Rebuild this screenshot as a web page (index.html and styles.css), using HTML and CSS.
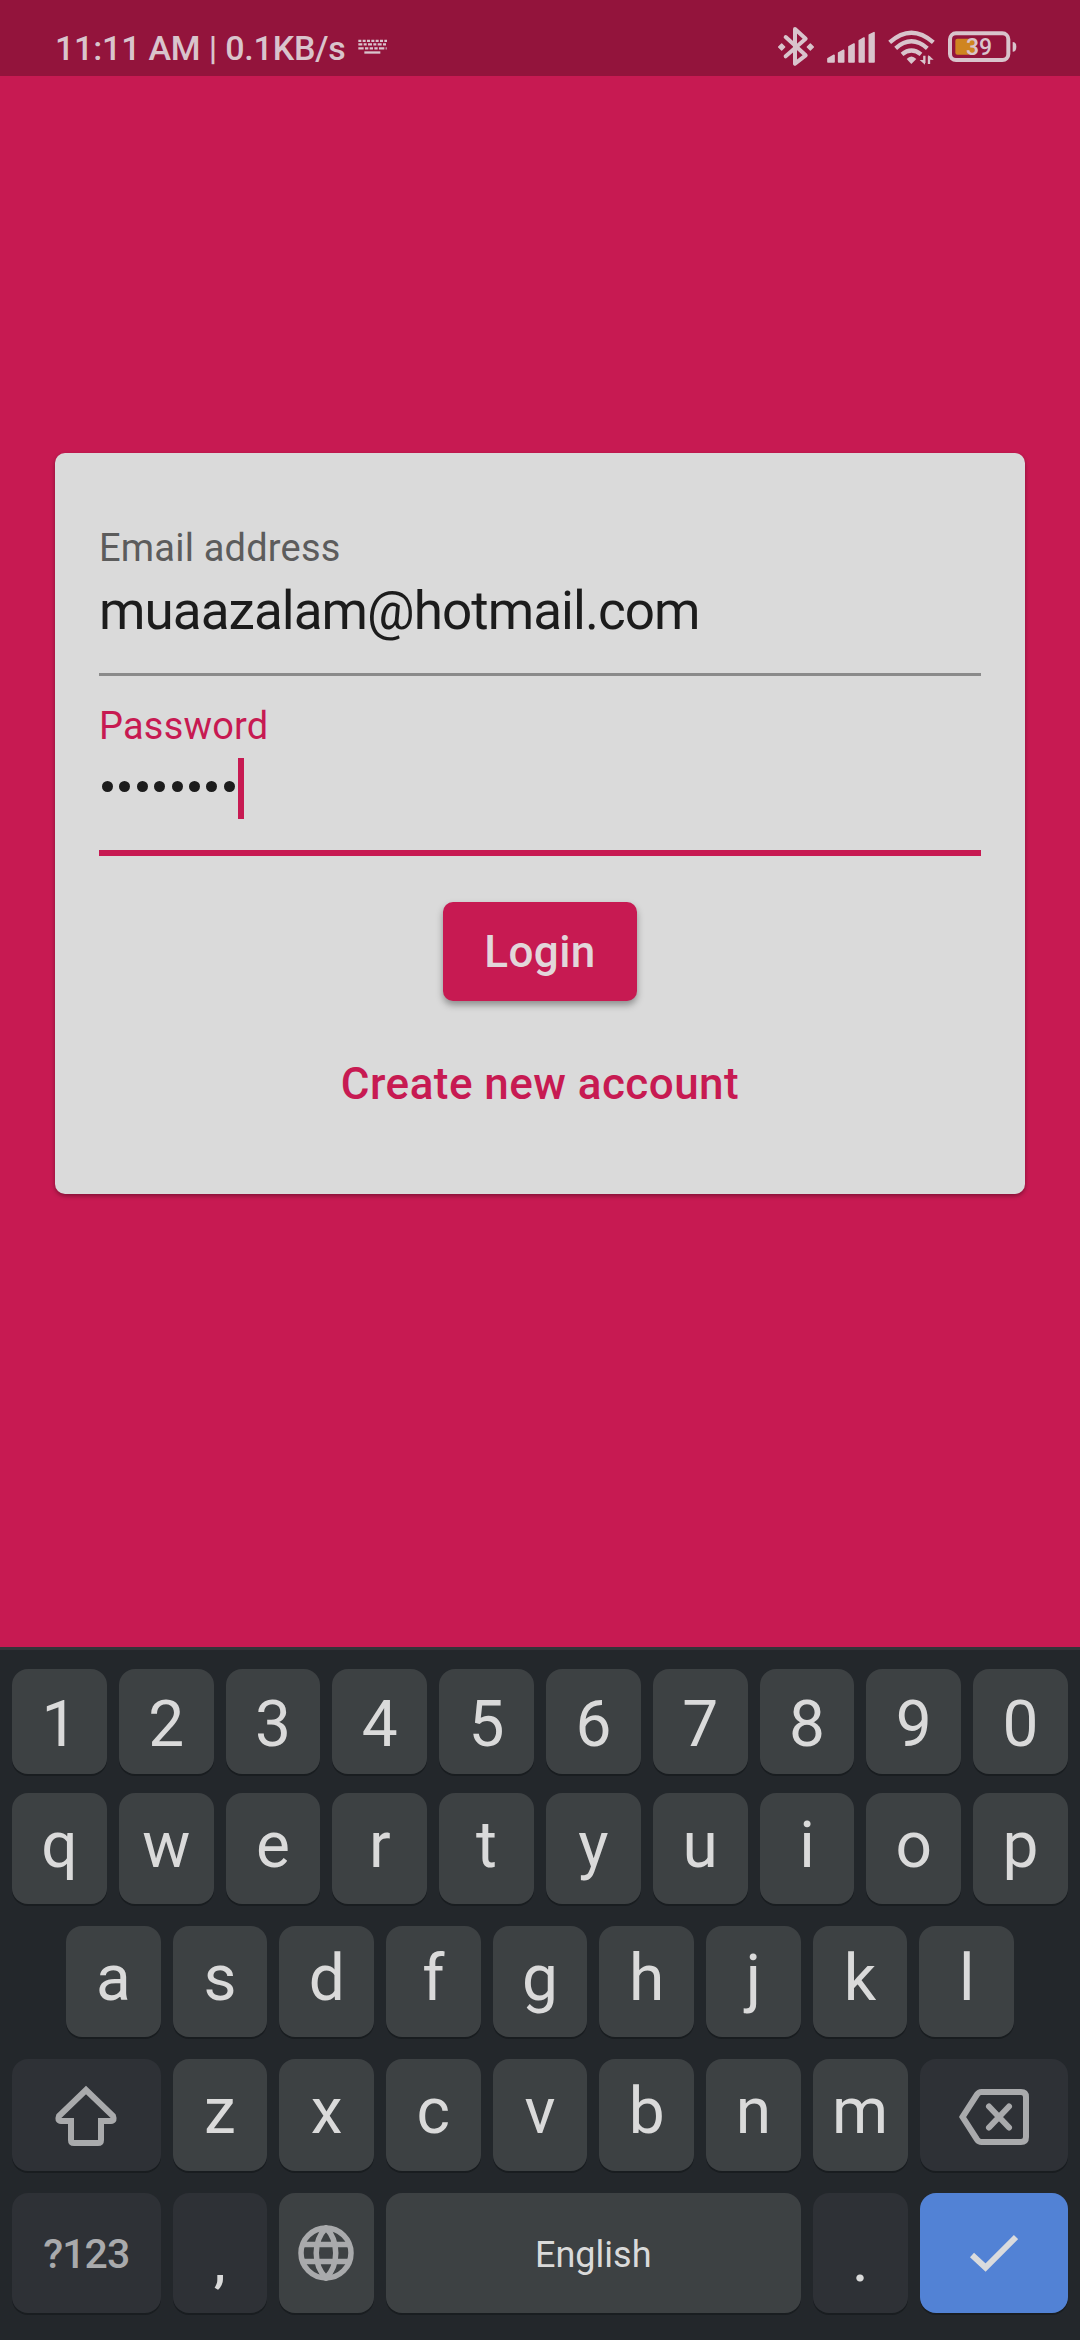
FILE: index.html
```html
<!DOCTYPE html>
<html lang="en">
<head>
<meta charset="utf-8">
<title>Login</title>
<link rel="stylesheet" href="styles.css">
</head>
<body>
<div class="screen">
  <header class="status">
    <span class="status-text">11:11 AM | 0.1KB/s</span>
    <svg class="ime" width="29" height="16" viewBox="0 0 87 48" fill="none" stroke="#d9c4cc">
      <path d="M1 5.500H87" stroke-width="7" stroke-dasharray="9 4"/>
      <path d="M1 16H86" stroke-width="7" stroke-dasharray="12 4 9 4"/>
      <path d="M1 28H86" stroke-width="7" stroke-dasharray="16 4 10 4 10 4 10 4"/>
      <path d="M19 40.500H67" stroke-width="7"/>
    </svg>
    <div class="status-icons">
      <svg width="36" height="42" viewBox="114 76 108 126" fill="none" stroke="#d9c4cc" stroke-width="12" stroke-linejoin="round" stroke-linecap="round">
        <path d="M137 112L197 167L165 192V88L197 117L137 170"/>
        <path d="M125 133L134 142L125 151L116 142ZM211 133L220 142L211 151L202 142Z" fill="#d9c4cc" stroke-width="4"/>
      </svg>
      <svg width="48" height="42" viewBox="261 76 144 126" fill="#d9c4cc" stroke="#d9c4cc" stroke-width="5" stroke-linejoin="round">
        <path d="M264 177L282 167V187H264ZM296 160L311 152V187H296ZM327 141L342 133V187H327ZM358 123L372 115V187H358ZM388 106L402 99V187H388Z"/>
      </svg>
      <svg width="47" height="42" viewBox="442 76 141 126" fill="none" stroke="#d9c4cc" stroke-width="13">
        <path d="M447 128Q512 70 578 128M465 146Q512 104 560 146M484 164Q512 141 541 164"/>
        <path d="M498 178Q512 163 527 178L512 193Z" fill="#d9c4cc" stroke="none"/>
        <path d="M551 168V190M565 193V170" stroke-width="7"/>
        <path d="M537 181H553V195ZM563 166V180H579Z" fill="#d9c4cc" stroke="none"/>
      </svg>
      <svg width="69" height="42" viewBox="626 76 207 126">
        <rect x="632" y="101" width="175" height="80" rx="18" fill="none" stroke="#d9c4cc" stroke-width="12"/>
        <path d="M820 127Q831 127 831 141Q831 156 820 156Z" fill="#d9c4cc"/>
        <rect x="648" y="117" width="62" height="48" rx="6" fill="#cf8520"/>
        <text x="719" y="167" text-anchor="middle" class="battery">39</text>
      </svg>
    </div>
  </header>

  <main class="stage">
    <form class="card">
      <div class="field">
        <label class="label">Email address</label>
        <div class="value">muaazalam@hotmail.com</div>
      </div>
      <div class="field focused">
        <label class="label">Password</label>
        <div class="value secret"><i></i><i></i><i></i><i></i><i></i><i></i><i></i><i></i><b class="caret"></b></div>
      </div>
      <button type="button" class="login">Login</button>
      <a class="create">Create new account</a>
    </form>
  </main>

  <section class="keyboard">
    <div class="row digits">
      <div class="key">1</div><div class="key">2</div><div class="key">3</div><div class="key">4</div><div class="key">5</div><div class="key">6</div><div class="key">7</div><div class="key">8</div><div class="key">9</div><div class="key">0</div>
    </div>
    <div class="row top">
      <div class="key">q</div><div class="key">w</div><div class="key">e</div><div class="key">r</div><div class="key">t</div><div class="key">y</div><div class="key">u</div><div class="key">i</div><div class="key">o</div><div class="key">p</div>
    </div>
    <div class="row home">
      <div class="key">a</div><div class="key">s</div><div class="key">d</div><div class="key">f</div><div class="key">g</div><div class="key">h</div><div class="key">j</div><div class="key">k</div><div class="key">l</div>
    </div>
    <div class="row lower">
      <div class="key dark wide">
        <svg width="64" height="64" viewBox="0 0 64 64" fill="none" stroke="#a9aaac" stroke-width="6" stroke-linejoin="round">
          <path d="M32 5L59 31Q61 36 57 36H47V55Q47 58 44 58H20Q17 58 17 55V36H7Q3 36 5 31Z" stroke-linejoin="miter"/>
        </svg>
      </div>
      <div class="key">z</div><div class="key">x</div><div class="key">c</div><div class="key">v</div><div class="key">b</div><div class="key">n</div><div class="key">m</div>
      <div class="key dark wide">
        <svg width="70" height="56" viewBox="0 0 70 56" fill="none" stroke="#a9aaac" stroke-width="6">
          <path d="M3.500 28L18 5.500Q19.700 3 22.500 3H62Q67 3 67 8V48Q67 53 62 53H22.500Q19.700 53 18 50.500Z"/>
          <path d="M30 17.500L50 38.500M50 17.500L30 38.500" stroke-linecap="round"/>
        </svg>
      </div>
    </div>
    <div class="row bottom">
      <div class="key dark wide symbols">?123</div>
      <div class="key dark punct">,</div>
      <div class="key globe">
        <svg width="56" height="56" viewBox="0 0 56 56" fill="none" stroke="#a9aaac" stroke-width="5.500">
          <circle cx="28" cy="28" r="25"/>
          <path d="M4 19.500H52M4 36.500H52M28 3C15 16 15 40 28 53C41 40 41 16 28 3Z"/>
        </svg>
      </div>
      <div class="key space">English</div>
      <div class="key dark punct">.</div>
      <div class="key wide enter">
        <svg width="48" height="38" viewBox="0 0 48 38" fill="none" stroke="#dadbdd" stroke-width="6">
          <path d="M2 21L15.500 33.500L46 3"/>
        </svg>
      </div>
    </div>
  </section>
</div>
</body>
</html>
```

FILE: styles.css
```css
* { box-sizing: border-box; }
body { margin: 0; }
svg { display: block; flex: none; }

.screen {
  width: 1080px;
  height: 2340px;
  display: flex;
  flex-direction: column;
  overflow: hidden;
  background: #c71a52;
  font-family: Roboto, sans-serif;
}

/* Status bar */
.status {
  height: 76px;
  flex: none;
  display: flex;
  align-items: flex-start;
  padding: 0 63px 0 55px;
  background: #93143c;
  color: #d9c4cc;
}
.status-text {
  padding-top: 28px;
  font-size: 34px;
  font-weight: 500;
  line-height: 40px;
  letter-spacing: -.2px;
  white-space: pre;
}
.ime { margin: 39px 0 0 12px; }
.status-icons {
  display: flex;
  gap: 13px;
  margin: 25px 0 0 auto;
}
.battery {
  font-size: 69px;
  font-weight: 500;
  fill: #d9c4cc;
}

/* Login card */
.stage {
  height: 1571px;
  flex: none;
  padding: 377px 55px 0;
}
.card {
  height: 741px;
  padding: 44px 44px 0;
  display: flex;
  flex-direction: column;
  align-items: center;
  border-radius: 10px;
  background: #dadada;
  box-shadow: 0 2px 4px rgba(0, 0, 0, .35);
}
.field {
  width: 882px;
  height: 179px;
  flex: none;
  padding-top: 29px;
  border-bottom: 3px solid #8a8a8a;
}
.field.focused {
  height: 180px;
  padding-top: 28px;
  border-bottom: 6px solid #c71a52;
}
.label {
  display: block;
  height: 44px;
  font-size: 38px;
  line-height: 44px;
  letter-spacing: .2px;
  color: #5c5c5c;
}
.focused .label { color: #c71a52; }
.value {
  height: 62px;
  margin-top: 10px;
  font-size: 53px;
  line-height: 62px;
  letter-spacing: -.95px;
  color: #1c1c1c;
}
.secret {
  display: flex;
  align-items: center;
  margin-top: 9px;
  padding-left: 3px;
}
.secret i {
  width: 11px;
  height: 11px;
  margin: 0 6.400px 4px 0;
  border-radius: 50%;
  background: #1c1c1c;
}
.caret {
  width: 5.500px;
  height: 61px;
  margin-left: -3px;
  background: #c71a52;
}
.login {
  width: 194px;
  height: 99px;
  flex: none;
  margin-top: 46px;
  padding: 0;
  border: 0;
  border-radius: 10px;
  background: #c71a52;
  box-shadow: 0 4px 7px rgba(0, 0, 0, .35);
  color: #e2d6da;
  font: 500 44px/101px Roboto, sans-serif;
  letter-spacing: .45px;
}
.create {
  margin-top: 57px;
  font-size: 44px;
  font-weight: 500;
  line-height: 52px;
  letter-spacing: .45px;
  color: #c71a52;
}

/* Keyboard */
.keyboard {
  height: 693px;
  flex: none;
  padding: 19px 12px 0;
  border-top: 3px solid #343439;
  background: #23272b;
}
.row {
  display: flex;
  gap: 12px;
}
.key {
  flex: 1 1 0;
  min-width: 0;
  display: flex;
  align-items: center;
  justify-content: center;
  border-radius: 16px;
  background: #3d4143;
  box-shadow: 0 2px 0 #191d20;
  color: #dadada;
  font-size: 64px;
  line-height: 76px;
}
.dark { background: #2e3136; }
.wide { flex: 0 0 148.500px; }
.digits { height: 105px; margin-bottom: 19px; }
.digits .key { padding-top: 7px; }
.top { height: 111px; margin-bottom: 22px; }
.top .key, .home .key { padding-bottom: 5px; }
.home { height: 111px; margin-bottom: 22px; padding: 0 54px; }
.lower { height: 112px; margin-bottom: 22px; }
.lower .key { padding-bottom: 6px; }
.lower .wide { padding: 3px 0 0; }
.bottom { height: 120px; }
.symbols {
  padding-top: 2px;
  color: #a9aaac;
  font-size: 41px;
  font-weight: 500;
  letter-spacing: -.9px;
}
.bottom .punct, .bottom .globe { flex: 0 0 94.500px; }
.punct {
  padding-top: 20px;
  font-size: 54px;
  font-weight: 500;
}
.bottom .space { font-size: 36px; padding-top: 4px; }
.bottom .enter { background: #5282d5; }
```
